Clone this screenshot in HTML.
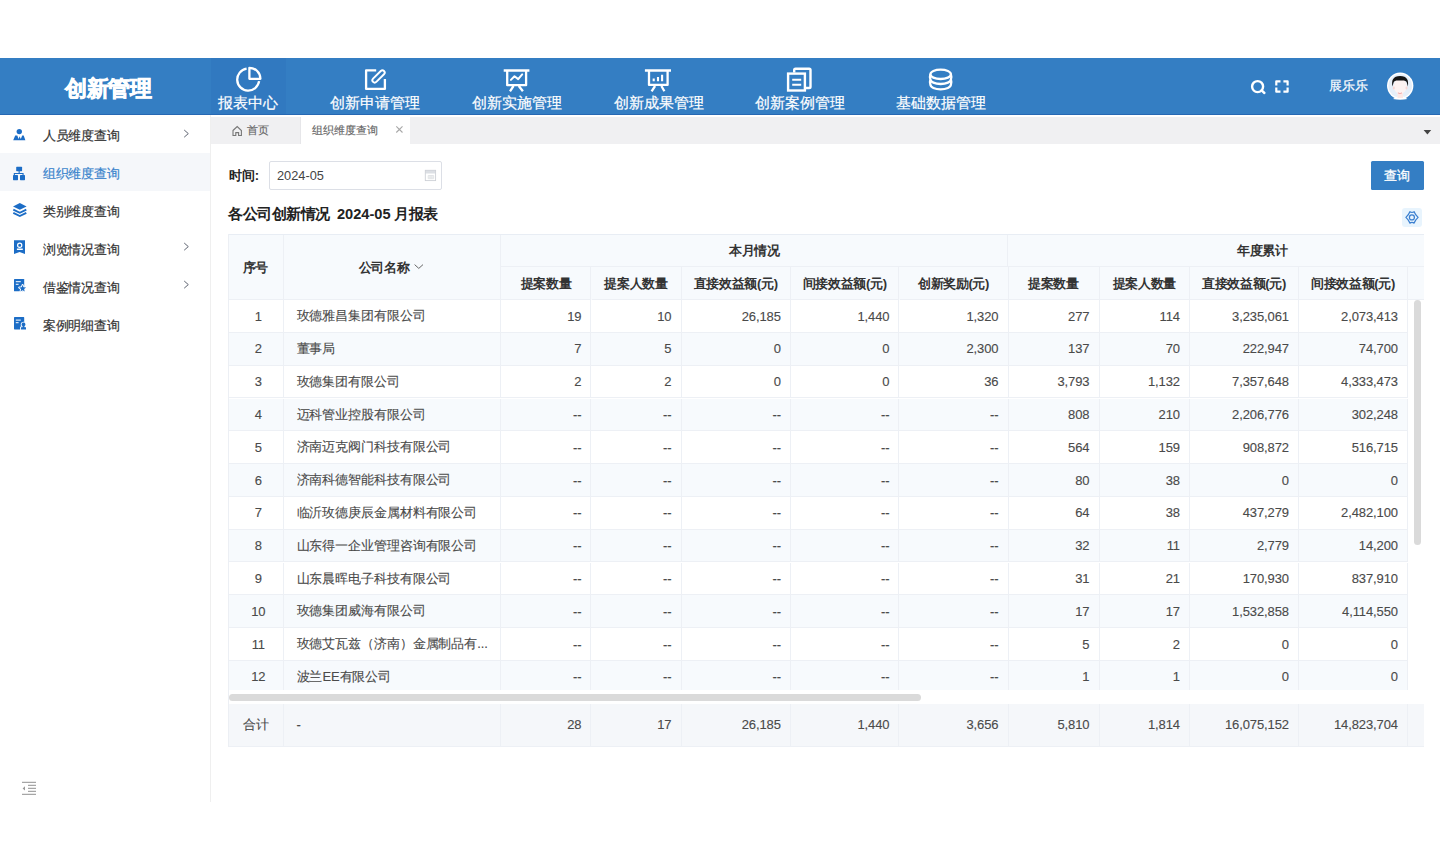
<!DOCTYPE html>
<html><head><meta charset="utf-8">
<style>
*{box-sizing:border-box;margin:0;padding:0}
html,body{width:1440px;height:860px;overflow:hidden;background:#fff;font-family:"Liberation Sans",sans-serif;color:#333}
.abs{position:absolute;white-space:nowrap}
#hdr{position:absolute;left:0;top:58px;width:1440px;height:57px;background:#347ec3;border-bottom:1.5px solid #2668b3}
#logo{position:absolute;left:0.8px;top:0;width:215px;height:57px;color:#fff;font-size:22px;letter-spacing:-0.3px;font-weight:bold;text-align:center;line-height:61.5px;-webkit-text-stroke:0.7px #fff}
.nav{position:absolute;top:0;height:56px;color:#fff;font-size:15px;letter-spacing:-0.15px;text-align:center}
.nav span{position:absolute;left:-20px;right:-20px;top:37px;line-height:16px;white-space:nowrap;-webkit-text-stroke:0.2px #fff}
#side{position:absolute;left:0;top:115px;width:211px;height:687px;border-right:1px solid #efefef;background:#fff}
.mi{position:absolute;left:0;width:210px;height:38px;font-size:13px;letter-spacing:-0.2px;color:#333;line-height:41px;-webkit-text-stroke:0.2px currentColor}
.mi .t{position:absolute;left:42.8px;top:0}
#tabs{position:absolute;left:211px;top:117px;width:1229px;height:27px;background:#f0f0f2}
.tab{position:absolute;top:0;height:27px;font-size:11px;line-height:27px;color:#666;white-space:nowrap;-webkit-text-stroke:0.15px #666}
.tr{position:absolute;left:228px;width:1180px;border-bottom:1px solid #edf0f5}
.td{position:absolute;top:0;height:100%;font-size:13px;letter-spacing:-0.1px;color:#4a4a4a;border-right:1px solid #edf0f5;display:flex;align-items:center;white-space:nowrap;overflow:hidden;padding-top:0.4px;-webkit-text-stroke:0.12px #4a4a4a}
.td.c{justify-content:center;padding-left:6px}
.td.l{padding-left:13px}
.td.r{justify-content:flex-end;padding-right:9px}
.th{position:absolute;font-size:13px;letter-spacing:-0.35px;font-weight:bold;color:#333;display:flex;align-items:center;justify-content:center;border-right:1px solid #edf0f5;border-bottom:1px solid #edf0f5;white-space:nowrap;padding-top:1.6px}
svg#ov{position:absolute;left:0;top:0;width:1440px;height:860px}
</style></head><body>
<div id="hdr">
  <div id="logo">创新管理</div>
  <div class="nav" style="left:211px;width:75px;background:#3179c0"><span style="left:-21.4px">报表中心</span></div>
  <div class="nav" style="left:318px;width:114px"><span>创新申请管理</span></div>
  <div class="nav" style="left:460px;width:114px"><span>创新实施管理</span></div>
  <div class="nav" style="left:602px;width:114px"><span>创新成果管理</span></div>
  <div class="nav" style="left:743px;width:114px"><span>创新案例管理</span></div>
  <div class="nav" style="left:884px;width:114px"><span>基础数据管理</span></div>
  <div class="abs" style="left:1329px;top:19.3px;color:#fff;font-size:13px;line-height:18px;-webkit-text-stroke:0.2px #fff">展乐乐</div>
</div>
<div id="side">
  <div class="mi" style="top:0"><span class="t">人员维度查询</span></div>
  <div class="mi" style="top:38px;background:#f5f7fa;color:#3a84cc"><span class="t">组织维度查询</span></div>
  <div class="mi" style="top:76px"><span class="t">类别维度查询</span></div>
  <div class="mi" style="top:114px"><span class="t">浏览情况查询</span></div>
  <div class="mi" style="top:152px"><span class="t">借鉴情况查询</span></div>
  <div class="mi" style="top:190px"><span class="t">案例明细查询</span></div>
</div>
<div id="tabs">
  <div class="tab" style="left:0;width:90px;padding-left:36px;border-right:1px solid #e6e6e9">首页</div>
  <div class="tab" style="left:90px;width:108.5px;background:#fff;padding-left:11px;top:-1px;height:28px;line-height:29px">组织维度查询</div>
</div>
<div class="abs" style="left:228.7px;top:167px;font-size:13px;font-weight:bold;color:#222;line-height:18px">时间:</div>
<div class="abs" style="left:269px;top:161px;width:173px;height:29px;border:1px solid #dcdfe6;border-radius:2px;font-size:12.8px;color:#444;padding-left:7px;line-height:28px">2024-05</div>
<div class="abs" style="left:1370.5px;top:161px;width:53.5px;height:29px;background:#347ec4;border-radius:1.5px;color:#fff;font-size:13px;text-align:center;line-height:30px;-webkit-text-stroke:0.3px #fff">查询</div>
<div class="abs" style="left:228.3px;top:204px;font-size:15px;letter-spacing:-0.5px;font-weight:bold;color:#222;line-height:20px">各公司创新情况</div>
<div class="abs" style="left:337px;top:204px;font-size:14.6px;font-weight:bold;color:#222;line-height:20px">2024-05</div>
<div class="abs" style="left:394.2px;top:204px;font-size:15px;letter-spacing:-0.5px;font-weight:bold;color:#222;line-height:20px">月报表</div>
<div class="abs" style="left:1401.5px;top:207.5px;width:20.5px;height:19.5px;background:#e8f4fd;border-radius:3px"></div>
<!-- table header -->
<div class="abs" style="left:228px;top:234px;width:1196px;height:66px;background:#f7fafd;border-top:1px solid #e8edf4"></div>
<div class="th" style="left:228px;top:235px;width:55.6px;height:65.1px">序号</div>
<div class="th" style="left:283.6px;top:235px;width:217.7px;height:65.1px">公司名称<span style="display:inline-block;width:16px"></span></div>
<div class="abs" style="left:501.3px;top:235px;width:922.7px;height:32.2px;overflow:hidden">
 <div class="th" style="left:0;top:0;width:507.2px;height:32.2px">本月情况</div>
 <div class="th" style="left:507.2px;top:0;width:509px;height:32.2px">年度累计</div>
</div>
<div class="th" style="left:501.3px;top:267.2px;width:90.2px;height:32.9px">提案数量</div>
<div class="th" style="left:591.5px;top:267.2px;width:90.0px;height:32.9px">提案人数量</div>
<div class="th" style="left:681.5px;top:267.2px;width:109.4px;height:32.9px">直接效益额(元)</div>
<div class="th" style="left:790.9px;top:267.2px;width:108.6px;height:32.9px">间接效益额(元)</div>
<div class="th" style="left:899.5px;top:267.2px;width:109.0px;height:32.9px">创新奖励(元)</div>
<div class="th" style="left:1008.5px;top:267.2px;width:91.0px;height:32.9px">提案数量</div>
<div class="th" style="left:1099.5px;top:267.2px;width:90.5px;height:32.9px">提案人数量</div>
<div class="th" style="left:1190.0px;top:267.2px;width:109.0px;height:32.9px">直接效益额(元)</div>
<div class="th" style="left:1299.0px;top:267.2px;width:109.0px;height:32.9px">间接效益额(元)</div>
<div class="th" style="left:1408px;top:267.2px;width:16px;height:32.9px;border-right:0"></div>
<div class="tr" style="top:300.10px;height:32.8px;background:#fff">
<div class="td c" style="left:0.0px;width:55.6px">1</div>
<div class="td l" style="left:55.6px;width:217.7px">玫德雅昌集团有限公司</div>
<div class="td r" style="left:273.3px;width:90.2px">19</div>
<div class="td r" style="left:363.5px;width:90.0px">10</div>
<div class="td r" style="left:453.5px;width:109.4px">26,185</div>
<div class="td r" style="left:562.9px;width:108.6px">1,440</div>
<div class="td r" style="left:671.5px;width:109.0px">1,320</div>
<div class="td r" style="left:780.5px;width:91.0px">277</div>
<div class="td r" style="left:871.5px;width:90.5px">114</div>
<div class="td r" style="left:962.0px;width:109.0px">3,235,061</div>
<div class="td r" style="left:1071.0px;width:109.0px">2,073,413</div>
</div>
<div class="tr" style="top:332.90px;height:32.8px;background:#f7fafd">
<div class="td c" style="left:0.0px;width:55.6px">2</div>
<div class="td l" style="left:55.6px;width:217.7px">董事局</div>
<div class="td r" style="left:273.3px;width:90.2px">7</div>
<div class="td r" style="left:363.5px;width:90.0px">5</div>
<div class="td r" style="left:453.5px;width:109.4px">0</div>
<div class="td r" style="left:562.9px;width:108.6px">0</div>
<div class="td r" style="left:671.5px;width:109.0px">2,300</div>
<div class="td r" style="left:780.5px;width:91.0px">137</div>
<div class="td r" style="left:871.5px;width:90.5px">70</div>
<div class="td r" style="left:962.0px;width:109.0px">222,947</div>
<div class="td r" style="left:1071.0px;width:109.0px">74,700</div>
</div>
<div class="tr" style="top:365.70px;height:32.8px;background:#fff">
<div class="td c" style="left:0.0px;width:55.6px">3</div>
<div class="td l" style="left:55.6px;width:217.7px">玫德集团有限公司</div>
<div class="td r" style="left:273.3px;width:90.2px">2</div>
<div class="td r" style="left:363.5px;width:90.0px">2</div>
<div class="td r" style="left:453.5px;width:109.4px">0</div>
<div class="td r" style="left:562.9px;width:108.6px">0</div>
<div class="td r" style="left:671.5px;width:109.0px">36</div>
<div class="td r" style="left:780.5px;width:91.0px">3,793</div>
<div class="td r" style="left:871.5px;width:90.5px">1,132</div>
<div class="td r" style="left:962.0px;width:109.0px">7,357,648</div>
<div class="td r" style="left:1071.0px;width:109.0px">4,333,473</div>
</div>
<div class="tr" style="top:398.50px;height:32.8px;background:#f7fafd">
<div class="td c" style="left:0.0px;width:55.6px">4</div>
<div class="td l" style="left:55.6px;width:217.7px">迈科管业控股有限公司</div>
<div class="td r" style="left:273.3px;width:90.2px">--</div>
<div class="td r" style="left:363.5px;width:90.0px">--</div>
<div class="td r" style="left:453.5px;width:109.4px">--</div>
<div class="td r" style="left:562.9px;width:108.6px">--</div>
<div class="td r" style="left:671.5px;width:109.0px">--</div>
<div class="td r" style="left:780.5px;width:91.0px">808</div>
<div class="td r" style="left:871.5px;width:90.5px">210</div>
<div class="td r" style="left:962.0px;width:109.0px">2,206,776</div>
<div class="td r" style="left:1071.0px;width:109.0px">302,248</div>
</div>
<div class="tr" style="top:431.30px;height:32.8px;background:#fff">
<div class="td c" style="left:0.0px;width:55.6px">5</div>
<div class="td l" style="left:55.6px;width:217.7px">济南迈克阀门科技有限公司</div>
<div class="td r" style="left:273.3px;width:90.2px">--</div>
<div class="td r" style="left:363.5px;width:90.0px">--</div>
<div class="td r" style="left:453.5px;width:109.4px">--</div>
<div class="td r" style="left:562.9px;width:108.6px">--</div>
<div class="td r" style="left:671.5px;width:109.0px">--</div>
<div class="td r" style="left:780.5px;width:91.0px">564</div>
<div class="td r" style="left:871.5px;width:90.5px">159</div>
<div class="td r" style="left:962.0px;width:109.0px">908,872</div>
<div class="td r" style="left:1071.0px;width:109.0px">516,715</div>
</div>
<div class="tr" style="top:464.10px;height:32.8px;background:#f7fafd">
<div class="td c" style="left:0.0px;width:55.6px">6</div>
<div class="td l" style="left:55.6px;width:217.7px">济南科德智能科技有限公司</div>
<div class="td r" style="left:273.3px;width:90.2px">--</div>
<div class="td r" style="left:363.5px;width:90.0px">--</div>
<div class="td r" style="left:453.5px;width:109.4px">--</div>
<div class="td r" style="left:562.9px;width:108.6px">--</div>
<div class="td r" style="left:671.5px;width:109.0px">--</div>
<div class="td r" style="left:780.5px;width:91.0px">80</div>
<div class="td r" style="left:871.5px;width:90.5px">38</div>
<div class="td r" style="left:962.0px;width:109.0px">0</div>
<div class="td r" style="left:1071.0px;width:109.0px">0</div>
</div>
<div class="tr" style="top:496.90px;height:32.8px;background:#fff">
<div class="td c" style="left:0.0px;width:55.6px">7</div>
<div class="td l" style="left:55.6px;width:217.7px">临沂玫德庚辰金属材料有限公司</div>
<div class="td r" style="left:273.3px;width:90.2px">--</div>
<div class="td r" style="left:363.5px;width:90.0px">--</div>
<div class="td r" style="left:453.5px;width:109.4px">--</div>
<div class="td r" style="left:562.9px;width:108.6px">--</div>
<div class="td r" style="left:671.5px;width:109.0px">--</div>
<div class="td r" style="left:780.5px;width:91.0px">64</div>
<div class="td r" style="left:871.5px;width:90.5px">38</div>
<div class="td r" style="left:962.0px;width:109.0px">437,279</div>
<div class="td r" style="left:1071.0px;width:109.0px">2,482,100</div>
</div>
<div class="tr" style="top:529.70px;height:32.8px;background:#f7fafd">
<div class="td c" style="left:0.0px;width:55.6px">8</div>
<div class="td l" style="left:55.6px;width:217.7px">山东得一企业管理咨询有限公司</div>
<div class="td r" style="left:273.3px;width:90.2px">--</div>
<div class="td r" style="left:363.5px;width:90.0px">--</div>
<div class="td r" style="left:453.5px;width:109.4px">--</div>
<div class="td r" style="left:562.9px;width:108.6px">--</div>
<div class="td r" style="left:671.5px;width:109.0px">--</div>
<div class="td r" style="left:780.5px;width:91.0px">32</div>
<div class="td r" style="left:871.5px;width:90.5px">11</div>
<div class="td r" style="left:962.0px;width:109.0px">2,779</div>
<div class="td r" style="left:1071.0px;width:109.0px">14,200</div>
</div>
<div class="tr" style="top:562.50px;height:32.8px;background:#fff">
<div class="td c" style="left:0.0px;width:55.6px">9</div>
<div class="td l" style="left:55.6px;width:217.7px">山东晨晖电子科技有限公司</div>
<div class="td r" style="left:273.3px;width:90.2px">--</div>
<div class="td r" style="left:363.5px;width:90.0px">--</div>
<div class="td r" style="left:453.5px;width:109.4px">--</div>
<div class="td r" style="left:562.9px;width:108.6px">--</div>
<div class="td r" style="left:671.5px;width:109.0px">--</div>
<div class="td r" style="left:780.5px;width:91.0px">31</div>
<div class="td r" style="left:871.5px;width:90.5px">21</div>
<div class="td r" style="left:962.0px;width:109.0px">170,930</div>
<div class="td r" style="left:1071.0px;width:109.0px">837,910</div>
</div>
<div class="tr" style="top:595.30px;height:32.8px;background:#f7fafd">
<div class="td c" style="left:0.0px;width:55.6px">10</div>
<div class="td l" style="left:55.6px;width:217.7px">玫德集团威海有限公司</div>
<div class="td r" style="left:273.3px;width:90.2px">--</div>
<div class="td r" style="left:363.5px;width:90.0px">--</div>
<div class="td r" style="left:453.5px;width:109.4px">--</div>
<div class="td r" style="left:562.9px;width:108.6px">--</div>
<div class="td r" style="left:671.5px;width:109.0px">--</div>
<div class="td r" style="left:780.5px;width:91.0px">17</div>
<div class="td r" style="left:871.5px;width:90.5px">17</div>
<div class="td r" style="left:962.0px;width:109.0px">1,532,858</div>
<div class="td r" style="left:1071.0px;width:109.0px">4,114,550</div>
</div>
<div class="tr" style="top:628.10px;height:32.8px;background:#fff">
<div class="td c" style="left:0.0px;width:55.6px">11</div>
<div class="td l" style="left:55.6px;width:217.7px">玫德艾瓦兹（济南）金属制品有...</div>
<div class="td r" style="left:273.3px;width:90.2px">--</div>
<div class="td r" style="left:363.5px;width:90.0px">--</div>
<div class="td r" style="left:453.5px;width:109.4px">--</div>
<div class="td r" style="left:562.9px;width:108.6px">--</div>
<div class="td r" style="left:671.5px;width:109.0px">--</div>
<div class="td r" style="left:780.5px;width:91.0px">5</div>
<div class="td r" style="left:871.5px;width:90.5px">2</div>
<div class="td r" style="left:962.0px;width:109.0px">0</div>
<div class="td r" style="left:1071.0px;width:109.0px">0</div>
</div>
<div class="tr" style="top:660.90px;height:32.8px;background:#f7fafd">
<div class="td c" style="left:0.0px;width:55.6px">12</div>
<div class="td l" style="left:55.6px;width:217.7px">波兰EE有限公司</div>
<div class="td r" style="left:273.3px;width:90.2px">--</div>
<div class="td r" style="left:363.5px;width:90.0px">--</div>
<div class="td r" style="left:453.5px;width:109.4px">--</div>
<div class="td r" style="left:562.9px;width:108.6px">--</div>
<div class="td r" style="left:671.5px;width:109.0px">--</div>
<div class="td r" style="left:780.5px;width:91.0px">1</div>
<div class="td r" style="left:871.5px;width:90.5px">1</div>
<div class="td r" style="left:962.0px;width:109.0px">0</div>
<div class="td r" style="left:1071.0px;width:109.0px">0</div>
</div>
<div class="abs" style="left:228px;top:690px;width:1196px;height:13.5px;background:#fff"></div>
<div class="abs" style="left:229px;top:694px;width:692px;height:7px;border-radius:4px;background:#dadada"></div>
<div class="abs" style="left:1413.5px;top:300px;width:7.5px;height:245px;border-radius:4px;background:#dadada"></div>
<div class="tr" style="top:703.5px;height:43.5px;width:1196px;background:#f5f7fa">
<div class="td c" style="left:0.0px;width:55.6px;padding-left:1px">合计</div>
<div class="td l" style="left:55.6px;width:217.7px">-</div>
<div class="td r" style="left:273.3px;width:90.2px">28</div>
<div class="td r" style="left:363.5px;width:90.0px">17</div>
<div class="td r" style="left:453.5px;width:109.4px">26,185</div>
<div class="td r" style="left:562.9px;width:108.6px">1,440</div>
<div class="td r" style="left:671.5px;width:109.0px">3,656</div>
<div class="td r" style="left:780.5px;width:91.0px">5,810</div>
<div class="td r" style="left:871.5px;width:90.5px">1,814</div>
<div class="td r" style="left:962.0px;width:109.0px">16,075,152</div>
<div class="td r" style="left:1071.0px;width:109.0px">14,823,704</div>
</div>
<div class="abs" style="left:228px;top:234px;width:1px;height:513px;background:#eceff4"></div>
<svg id="ov" viewBox="0 0 1440 860">
 <g fill="none" stroke="#fff" stroke-linejoin="round" stroke-linecap="butt">
  <!-- pie -->
  <path d="M246.6 68.7 A11 11 0 1 0 259.1 81.2" stroke-width="2.3"/>
  <path d="M249.4 67.8 V78.8 H260.4 A11 11 0 0 0 249.4 67.8 Z" stroke-width="2.3"/>
  <!-- edit -->
  <path d="M376.2 70.4 H366.1 V88.9 H384.9 V78.9" stroke-width="2.3"/>
  <rect x="370.8" y="74.2" width="15.5" height="4.6" rx="2.3" transform="rotate(-45 378.5 76.5)" stroke-width="1.9"/>
  <!-- chart -->
  <path d="M503.7 70.5 H529.4 M507.2 70.5 V85.2 H526.1 V70.5 M513.5 86 L510 91.3 M518.8 86 L522.9 91.3" stroke-width="2.3"/>
  <path d="M510.9 79.9 L514.5 76.3 L518.2 79.1 L522.2 74.4" stroke-width="2" stroke-linecap="round"/>
  <!-- bars -->
  <path d="M644.9 70.5 H671 M649 70.5 V84.9 H667.6 V70.5 M655.1 86 L651.6 91.3 M661.4 86 L664.4 91.3" stroke-width="2.3"/>
  <path d="M653.7 78.5 V81.2 M658 76.9 V81.2 M662.1 74.8 V81.2" stroke-width="2.1"/>
  <!-- doc -->
  <rect x="788.1" y="73.6" width="16.8" height="16.9" stroke-width="2.4" stroke-linejoin="miter"/>
  <path d="M794.2 72.5 V70 Q794.2 68.7 795.5 68.7 H809.2 Q810.5 68.7 810.5 70 V86.7 Q810.5 88 809.2 88 H805.5" stroke-width="2.4"/>
  <path d="M792.2 79.7 H801.2 M792.2 84.7 H801.2" stroke-width="2.1"/>
  <!-- db -->
  <ellipse cx="940.65" cy="74.3" rx="10.25" ry="4.7" stroke-width="2.3"/>
  <path d="M930.4 74.3 Q929.5 76.8 930.4 79.3 A10.25 4.7 0 0 0 950.9 79.3 Q951.8 76.8 950.9 74.3 M930.4 79.3 Q929.5 81.95 930.4 84.6 A10.25 4.7 0 0 0 950.9 84.6 Q951.8 81.95 950.9 79.3" stroke-width="2.3"/>
  <!-- search -->
  <circle cx="1257.6" cy="86.6" r="5.5" stroke-width="2.4"/>
  <path d="M1261.6 90.4 L1264.4 93" stroke-width="2.4" stroke-linecap="round"/>
  <!-- fullscreen -->
  <path d="M1276.3 85.6 V81.3 H1280.5 M1283.4 81.3 H1287.6 V85.6 M1287.6 87.4 V91.7 H1283.4 M1280.5 91.7 H1276.3 V87.4" stroke-width="2.2"/>
 </g>
 <!-- avatar -->
 <circle cx="1400.2" cy="85.8" r="13.2" fill="#fff"/>
 <circle cx="1400.2" cy="85.8" r="11.8" fill="#e6eff9"/>
 <path d="M1393 99 Q1400.2 93 1407.4 99 Q1400.2 100.6 1393 99 Z" fill="#fff"/>
 <rect x="1397.4" y="92" width="5.6" height="6" fill="#fde9e6"/>
 <ellipse cx="1400.2" cy="86.2" rx="6.6" ry="7.4" fill="#fdf3f2"/>
 <ellipse cx="1393.9" cy="88" rx="1" ry="1.4" fill="#f9d6d3"/>
 <ellipse cx="1406.5" cy="88" rx="1" ry="1.4" fill="#f9d6d3"/>
 <path d="M1397.9 92.9 Q1400 94.2 1402 92.9" stroke="#f3a9a9" stroke-width="1" fill="none"/>
 <path d="M1392.4 86.5 C1391.4 80 1393 76.2 1400.1 76 C1407.2 76.2 1408.8 80 1407.9 86.5 L1406.8 82.5 C1406.2 80.6 1404 80.2 1400.1 80.5 C1396.2 80.2 1394.2 80.6 1393.6 82.5 Z" fill="#151515"/>
 <!-- sidebar icons -->
 <g fill="#1c6dc6">
  <circle cx="19.3" cy="131.6" r="2.7"/>
  <path d="M15.2 135.6 L17.3 135.6 L18.6 139 L19.6 136.2 L20.8 139 L22.2 135.6 L23.7 135.6 L25.4 140.2 L13.2 140.2 Z"/>
  <rect x="16.2" y="166.8" width="5.9" height="4.4" rx="0.6"/>
  <rect x="13" y="175" width="5" height="5.2" rx="0.6"/>
  <rect x="20" y="175" width="5" height="5.2" rx="0.6"/>
  <path d="M18.6 171 h1.1 v2 h3.9 v2 h-1.1 v-1 h-7.6 v1 h-1.1 v-2 h4.8z"/>
  <path d="M13 206.4 L19.8 203 L26.6 206.4 L19.8 209.8 Z"/>
 </g>
 <path d="M13.3 209.6 L19.8 212.8 L26.3 209.6 M13.3 212.8 L19.8 216 L26.3 212.8" fill="none" stroke="#1c6dc6" stroke-width="1.9"/>
 <path d="M14 240.2 H25 V254.1 L19.6 252 L14 254.1 Z" fill="#1c6dc6"/>
 <circle cx="19.7" cy="245.3" r="2.1" fill="none" stroke="#fff" stroke-width="1.2"/>
 <rect x="16.9" y="248.5" width="5.9" height="1.5" fill="#fff"/>
 <rect x="14" y="279" width="10.2" height="12.3" rx="0.6" fill="#1c6dc6"/>
 <path d="M15.8 281.7 H20.8 M15.8 284.3 H18.6" stroke="#fff" stroke-width="1"/>
 <path d="M22.60 284.9 L23.55 287.35 L26.1 287.5 L24.1 289.1 L24.75 291.6 L22.60 290.2 L20.45 291.6 L21.1 289.1 L19.1 287.5 L21.65 287.35 Z" fill="#1c6dc6" stroke="#fff" stroke-width="1.8" stroke-linejoin="round" paint-order="stroke"/>
 <rect x="14" y="317.1" width="10.2" height="12.3" rx="0.6" fill="#1c6dc6"/>
 <path d="M15.8 320.1 H20.8 M15.8 322.7 H18.6" stroke="#fff" stroke-width="1"/>
 <path d="M23.5 322.6 A1.9 1.9 0 0 1 24.4 326.2 L24.6 327.3 H26 V329.4 H20.9 V327.3 H22.4 L22.6 326.2 A1.9 1.9 0 0 1 23.5 322.6 Z" fill="#1c6dc6" stroke="#fff" stroke-width="1.8" stroke-linejoin="round" paint-order="stroke"/>
 <!-- chevrons -->
 <g fill="none" stroke="#5f6572" stroke-width="1">
  <path d="M184.2 130 L188.3 133.6 L184.2 137.2"/>
  <path d="M184.2 243 L188.3 246.6 L184.2 250.2"/>
  <path d="M184.2 281 L188.3 284.6 L184.2 288.2"/>
 </g>
 <!-- collapse icon -->
 <path d="M22 782.3 H36 M28 785.3 H36 M28 788.4 H36 M28 791.4 H36 M22 794.3 H36" stroke="#a6a6a6" stroke-width="1.3"/>
 <path d="M25 786.2 L22.6 788.4 L25 790.6 Z" fill="#999"/>
 <!-- tab icons -->
 <path d="M233 130.5 L237.2 126.5 L241.4 130.5 V135.5 H238.6 V132.6 H235.8 V135.5 H233 Z" fill="none" stroke="#777" stroke-width="1.1"/>
 <path d="M396.3 126.3 L402.5 132.5 M402.5 126.3 L396.3 132.5" stroke="#a8a8a8" stroke-width="1.1"/>
 <path d="M1423.6 130 H1431.2 L1427.4 134.6 Z" fill="#444"/>
 <!-- calendar -->
 <rect x="425.3" y="170.3" width="10.3" height="3.2" fill="#dcdfe4"/>
 <g fill="none" stroke="#cdd0d6" stroke-width="0.9">
  <rect x="425.3" y="170.3" width="10.3" height="10.3"/>
  <path d="M428.2 175.5 H433.7 V178.7 H428.2 Z M430.05 175.5 V178.7 M431.9 175.5 V178.7 M428.2 177.1 H433.7" stroke="#dadce0" stroke-width="0.7"/>
 </g>
 <!-- sort chevron -->
 <path d="M414.6 264.6 L418.8 268.4 L423 264.6" fill="none" stroke="#666" stroke-width="1"/>
 <!-- settings gear -->
 <g fill="none" stroke="#3b7fd0" stroke-width="1.25" stroke-linejoin="round">
  <path d="M1409.9 211.7 Q1412 213 1414.1 211.7 Q1415.4 215 1418.1 217.4 Q1415.4 219.8 1414.1 223.1 Q1412 221.8 1409.9 223.1 Q1408.6 219.8 1405.9 217.4 Q1408.6 215 1409.9 211.7 Z"/>
  <circle cx="1411.9" cy="217.4" r="2.5"/>
 </g>
</svg>
</body></html>
